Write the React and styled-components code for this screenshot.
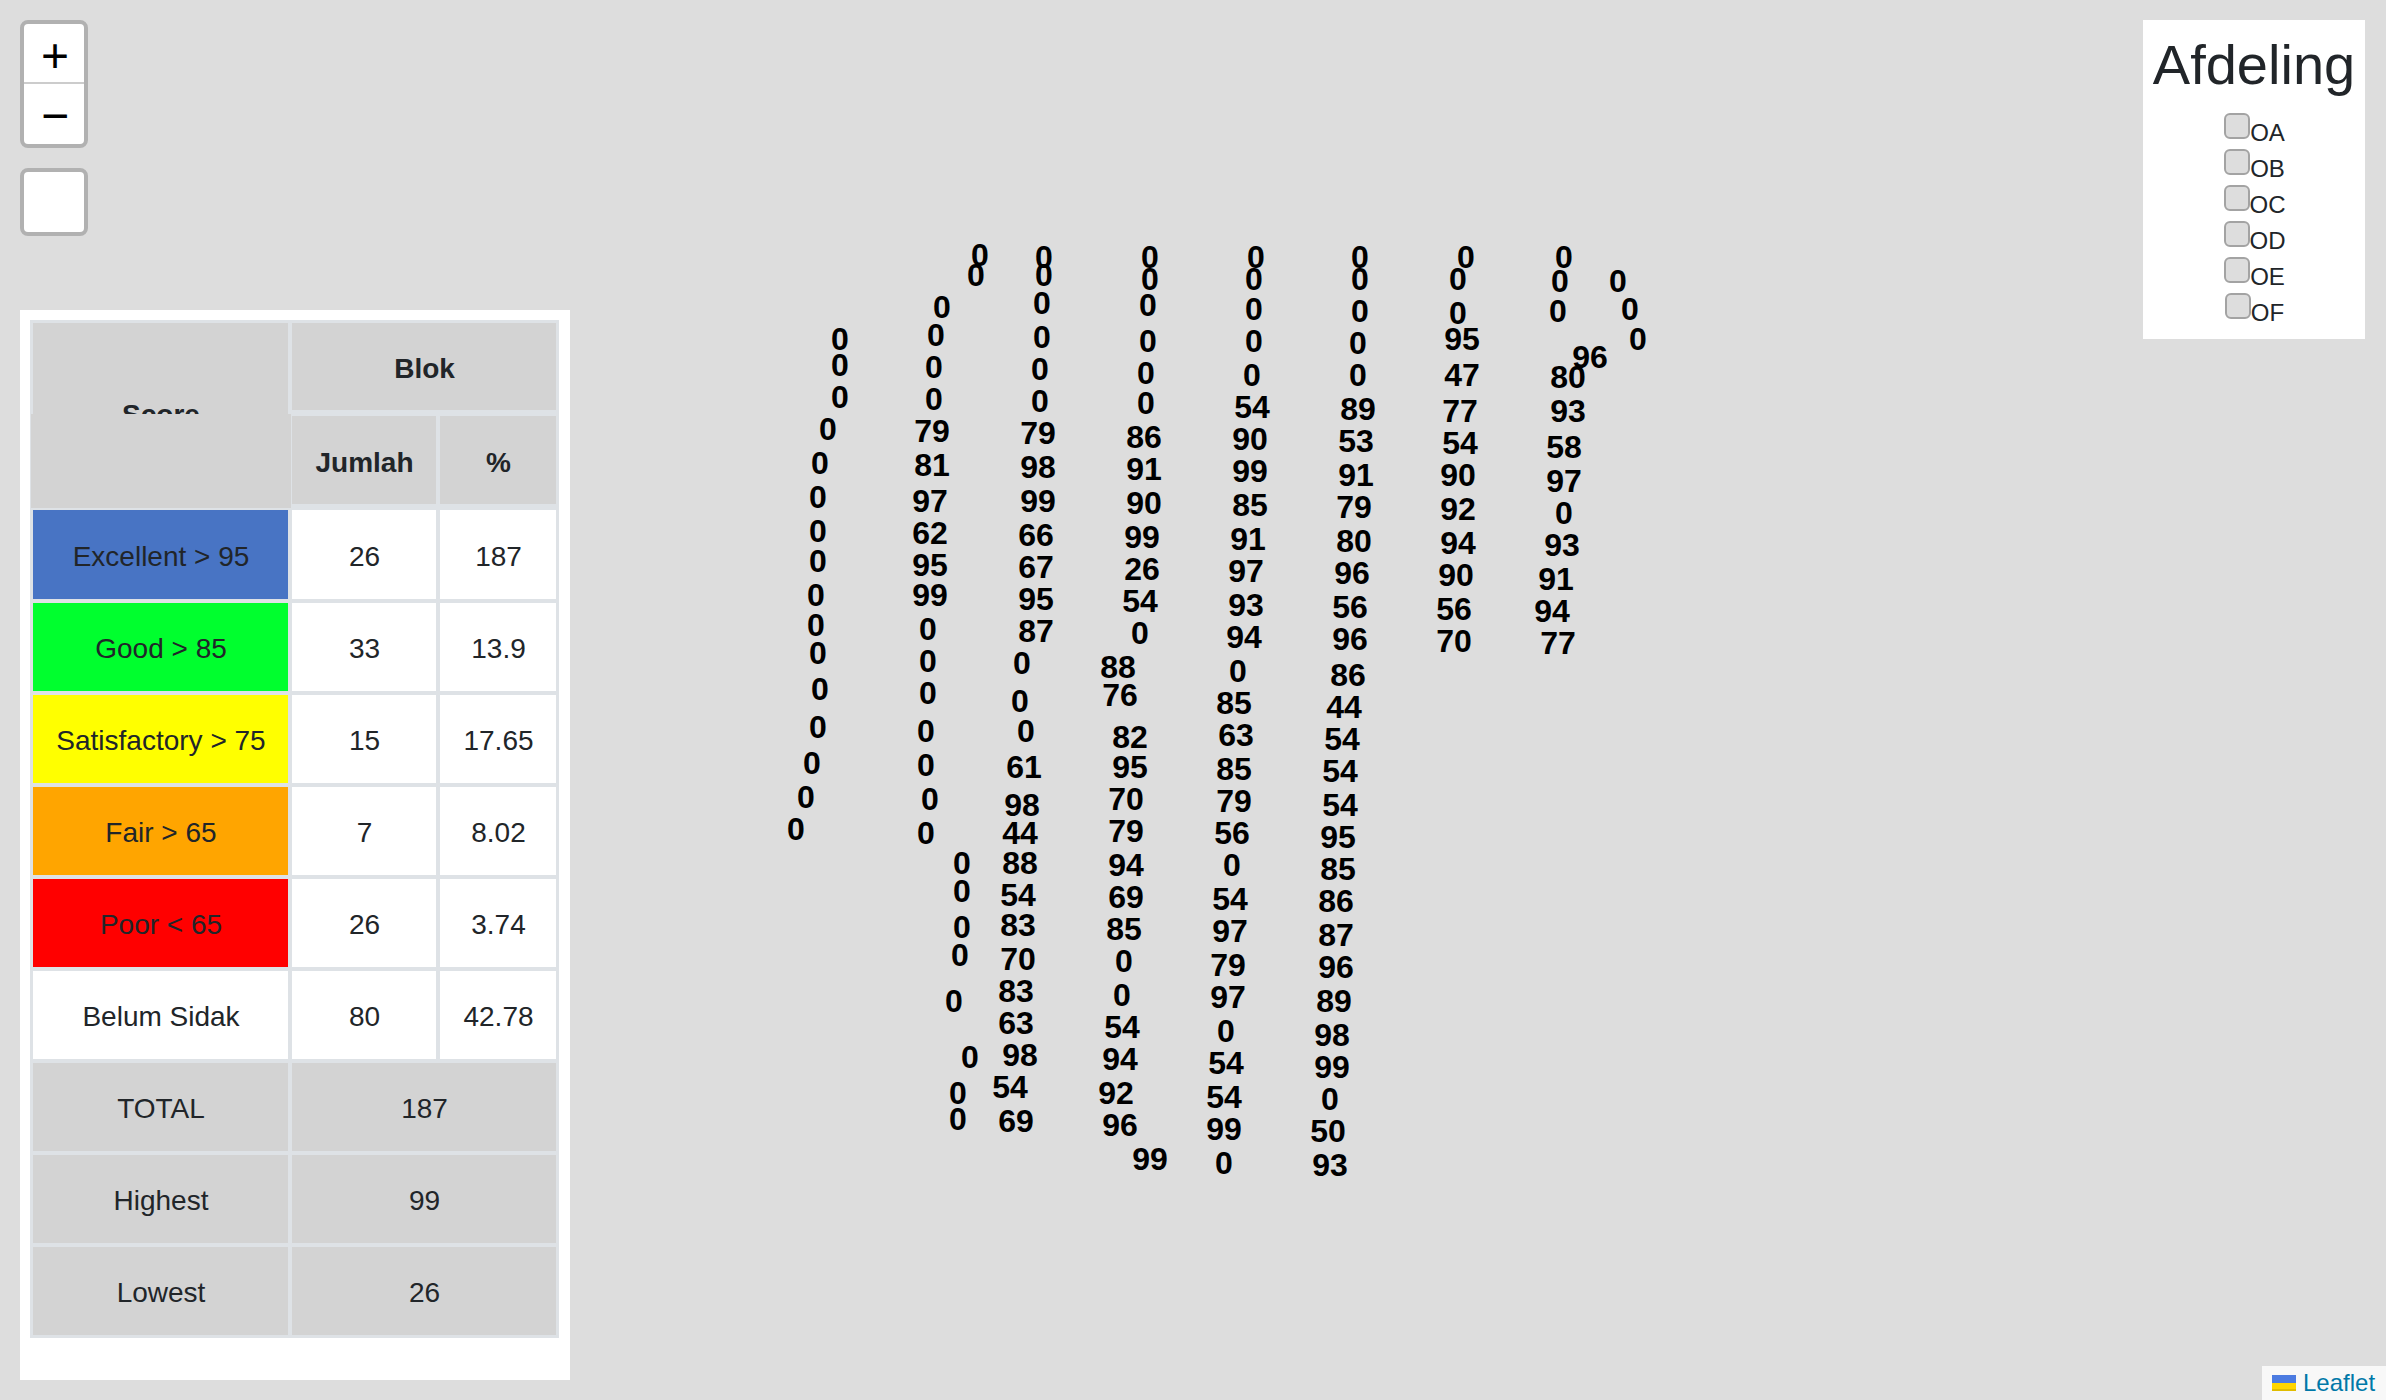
import React from "react";
import styled, { createGlobalStyle } from "styled-components";

const GlobalStyle = createGlobalStyle`
  * { box-sizing: border-box; }
  body {
    margin: 0;
    background: #ddd;
    color: #212529;
    font-family: "Liberation Sans", Arial, Helvetica, sans-serif;
  }
`;

const MapView = styled.main`
  position: relative;
  width: 100%;
  height: 1400px;
  overflow: hidden;
  background: #ddd;
  display: flex;
  justify-content: space-between;
`;

const LeftControls = styled.div`
  display: flex;
  flex-direction: column;
  justify-content: space-between;
  align-items: flex-start;
  padding: 20px;
`;

const ButtonStack = styled.div`
  display: flex;
  flex-direction: column;
  gap: 20px;
`;

const Bar = styled.div`
  width: 68px;
  border: 4px solid #b1b1b1;
  border-radius: 8px;
  background: #b1b1b1;
`;

const BarButton = styled.button`
  display: flex;
  align-items: center;
  justify-content: center;
  width: 60px;
  height: 60px;
  padding: ${(p) => p.$shift || 0}px 0 0 2px;
  border: 0;
  border-bottom: ${(p) => (p.$divided ? "2px solid #ccc" : "0")};
  border-radius: ${(p) => p.$radius};
  background: #fff;
  color: #000;
  font: 48px/54px "Liberation Sans", Arial, sans-serif;
`;

const Legend = styled.section`
  width: 550px;
  height: 1070px;
  padding: 10px 10px 0;
  background: #fff;
`;

const Table = styled.div`
  display: flex;
  flex-direction: column;
  gap: 4px;
  width: 529px;
  padding: 3px;
  background: #dee2e6;
  font-size: 28px;
  line-height: 42px;
`;

const HeadRow = styled.div`
  display: flex;
  gap: 4px;
  height: 183px;
`;

const ScoreColumn = styled.div`
  width: 255px;
`;

const ScoreTitle = styled.div`
  height: 91px;
  padding: 71px 0 0 1px;
  overflow: hidden;
  background: #d3d3d3;
  font-weight: 700;
  text-align: center;
`;

const ScoreFiller = styled.div`
  height: 94px;
  margin: 0 -3px 0 -2px;
  background: #d3d3d3;
`;

const HeadGroup = styled.div`
  display: flex;
  flex-direction: column;
  gap: 6px;
`;

const Row = styled.div`
  display: flex;
  gap: 4px;
`;

const Cell = styled.div`
  display: flex;
  align-items: center;
  justify-content: center;
  width: ${(p) => p.$w}px;
  height: ${(p) => p.$h || 88}px;
  padding: ${(p) => (p.$low ? 5 : 3)}px 0 0 1px;
  background: ${(p) => p.$bg || "#fff"};
  font-weight: ${(p) => (p.$bold ? 700 : 400)};
`;

const Filter = styled.section`
  align-self: flex-start;
  width: 222px;
  height: 319px;
  margin: 20px 21px 0 0;
  padding: 11px 0 0;
  background: #fff;
  text-align: center;
`;

const FilterTitle = styled.h1`
  margin: 0 0 12px;
  font-size: 56px;
  font-weight: 400;
  line-height: 68px;
`;

const Option = styled.label`
  display: flex;
  justify-content: center;
  height: 36px;
  padding-left: 1px;
  font-size: 24px;
  line-height: 36px;
`;

const Check = styled.input`
  appearance: none;
  width: 26px;
  height: 26px;
  margin: 2px 0 0;
  border: 2px solid #a3a3a3;
  border-radius: 6px;
  background: #ddd;
`;

const OptionText = styled.span`
  padding-top: 4px;
`;

const Attribution = styled.div`
  position: absolute;
  right: 0;
  bottom: 0;
  display: flex;
  align-items: center;
  gap: 7px;
  width: 124px;
  height: 34px;
  padding-left: 10px;
  background: #f8f8f8;
  color: #0078a8;
  font-size: 24px;
  line-height: 34px;
`;

const Flag = styled.svg`
  width: 24px;
  height: 16px;
`;

const Marker = styled.span`
  position: absolute;
  width: 40px;
  margin: -4px 0 0 -20px;
  color: #000;
  font-size: 32px;
  font-weight: 700;
  line-height: 32px;
  text-align: center;
`;

const scores = [
  ["Excellent > 95", "26", "187", "#4874c4"],
  ["Good > 85", "33", "13.9", "#00ff2e"],
  ["Satisfactory > 75", "15", "17.65", "#ffff00"],
  ["Fair > 65", "7", "8.02", "#ffa500"],
  ["Poor < 65", "26", "3.74", "#ff0000"],
  ["Belum Sidak", "80", "42.78", "#fff"],
];

const totals = [["TOTAL", "187"], ["Highest", "99"], ["Lowest", "26"]];

const sections = ["OA", "OB", "OC", "OD", "OE", "OF"];

// Block markers: score, horizontal centre, top of the digits.
const markers = [
  [0, 840, 327], [0, 840, 353], [0, 840, 385], [0, 828, 417], [0, 820, 451], [0, 818, 485],
  [0, 818, 519], [0, 818, 549], [0, 816, 583], [0, 816, 613], [0, 818, 641], [0, 820, 677],
  [0, 818, 715], [0, 812, 751], [0, 806, 785], [0, 796, 817],

  [0, 942, 295], [0, 936, 323], [0, 934, 355], [0, 934, 387], [79, 932, 419], [81, 932, 453],
  [97, 930, 489], [62, 930, 521], [95, 930, 553], [99, 930, 583], [0, 928, 617], [0, 928, 649],
  [0, 928, 681], [0, 926, 719], [0, 926, 753], [0, 930, 787], [0, 926, 821], [0, 962, 851],
  [0, 962, 879], [0, 962, 915], [0, 960, 943], [0, 954, 989], [0, 970, 1045], [0, 958, 1081],
  [0, 958, 1107],

  [0, 980, 243], [0, 976, 263], [0, 1044, 245], [0, 1044, 263], [0, 1042, 291], [0, 1042, 325],
  [0, 1040, 357], [0, 1040, 389], [79, 1038, 421], [98, 1038, 455], [99, 1038, 489],
  [66, 1036, 523], [67, 1036, 555], [95, 1036, 587], [87, 1036, 619], [0, 1022, 651],
  [0, 1020, 689], [0, 1026, 719], [61, 1024, 755], [98, 1022, 793], [44, 1020, 821],
  [88, 1020, 851], [54, 1018, 883], [83, 1018, 913], [70, 1018, 947], [83, 1016, 979],
  [63, 1016, 1011], [98, 1020, 1043], [54, 1010, 1075], [69, 1016, 1109],

  [0, 1150, 245], [0, 1150, 267], [0, 1148, 293], [0, 1148, 329], [0, 1146, 361],
  [0, 1146, 391], [86, 1144, 425], [91, 1144, 457], [90, 1144, 491], [99, 1142, 525],
  [26, 1142, 557], [54, 1140, 589], [0, 1140, 621], [88, 1118, 655], [76, 1120, 683],
  [82, 1130, 725], [95, 1130, 755], [70, 1126, 787], [79, 1126, 819], [94, 1126, 853],
  [69, 1126, 885], [85, 1124, 917], [0, 1124, 949], [0, 1122, 983], [54, 1122, 1015],
  [94, 1120, 1047], [92, 1116, 1081], [96, 1120, 1113], [99, 1150, 1147],

  [0, 1256, 245], [0, 1254, 267], [0, 1254, 297], [0, 1254, 329], [0, 1252, 363],
  [54, 1252, 395], [90, 1250, 427], [99, 1250, 459], [85, 1250, 493], [91, 1248, 527],
  [97, 1246, 559], [93, 1246, 593], [94, 1244, 625], [0, 1238, 659], [85, 1234, 691],
  [63, 1236, 723], [85, 1234, 757], [79, 1234, 789], [56, 1232, 821], [0, 1232, 853],
  [54, 1230, 887], [97, 1230, 919], [79, 1228, 953], [97, 1228, 985], [0, 1226, 1019],
  [54, 1226, 1051], [54, 1224, 1085], [99, 1224, 1117], [0, 1224, 1151],

  [0, 1360, 245], [0, 1360, 267], [0, 1360, 299], [0, 1358, 331], [0, 1358, 363],
  [89, 1358, 397], [53, 1356, 429], [91, 1356, 463], [79, 1354, 495], [80, 1354, 529],
  [96, 1352, 561], [56, 1350, 595], [96, 1350, 627], [86, 1348, 663], [44, 1344, 695],
  [54, 1342, 727], [54, 1340, 759], [54, 1340, 793], [95, 1338, 825], [85, 1338, 857],
  [86, 1336, 889], [87, 1336, 923], [96, 1336, 955], [89, 1334, 989], [98, 1332, 1023],
  [99, 1332, 1055], [0, 1330, 1087], [50, 1328, 1119], [93, 1330, 1153],

  [0, 1466, 245], [0, 1458, 267], [0, 1458, 301], [95, 1462, 327], [47, 1462, 363],
  [77, 1460, 399], [54, 1460, 431], [90, 1458, 463], [92, 1458, 497], [94, 1458, 531],
  [90, 1456, 563], [56, 1454, 597], [70, 1454, 629],

  [0, 1564, 245], [0, 1560, 269], [0, 1558, 299], [96, 1590, 345], [80, 1568, 365],
  [93, 1568, 399], [58, 1564, 435], [97, 1564, 469], [0, 1564, 501], [93, 1562, 533],
  [91, 1556, 567], [94, 1552, 599], [77, 1558, 631], [0, 1618, 269], [0, 1630, 297],
  [0, 1638, 327],
];

function ScoreTable() {
  return (
    <Table>
      <HeadRow>
        <ScoreColumn>
          <ScoreTitle>Score</ScoreTitle>
          <ScoreFiller />
        </ScoreColumn>
        <HeadGroup>
          <Cell $w={264} $h={87} $bg="#d3d3d3" $bold $low>Blok</Cell>
          <Row>
            <Cell $w={144} $bg="#d3d3d3" $bold $low>Jumlah</Cell>
            <Cell $w={116} $bg="#d3d3d3" $bold $low>%</Cell>
          </Row>
        </HeadGroup>
      </HeadRow>
      {scores.map(([label, count, percent, color], i) => (
        <Row key={label}>
          <Cell $w={255} $h={i === 0 ? 89 : 88} $bg={color} $low={i === 0}>{label}</Cell>
          <Cell $w={144} $h={i === 0 ? 89 : 88} $low={i === 0}>{count}</Cell>
          <Cell $w={116} $h={i === 0 ? 89 : 88} $low={i === 0}>{percent}</Cell>
        </Row>
      ))}
      {totals.map(([label, value]) => (
        <Row key={label}>
          <Cell $w={255} $bg="#d3d3d3">{label}</Cell>
          <Cell $w={264} $bg="#d3d3d3">{value}</Cell>
        </Row>
      ))}
    </Table>
  );
}

export default function App() {
  return (
    <>
      <GlobalStyle />
      <MapView>
        {markers.map(([score, x, y]) => (
          <Marker key={`${x}-${y}`} style={{ left: x, top: y }}>{score}</Marker>
        ))}
        <LeftControls>
          <ButtonStack>
            <Bar>
              <BarButton $divided $shift={6} $radius="4px 4px 0 0">+</BarButton>
              <BarButton $shift={4} $radius="0 0 4px 4px">−</BarButton>
            </Bar>
            <Bar>
              <BarButton $radius="4px" aria-label="Layers" />
            </Bar>
          </ButtonStack>
          <Legend>
            <ScoreTable />
          </Legend>
        </LeftControls>
        <Filter>
          <FilterTitle>Afdeling</FilterTitle>
          {sections.map((name) => (
            <Option key={name}>
              <Check type="checkbox" />
              <OptionText>{name}</OptionText>
            </Option>
          ))}
        </Filter>
        <Attribution>
          <Flag viewBox="0 0 12 8">
            <path fill="#4c7be1" d="M0 0h12v4H0z" />
            <path fill="#ffd500" d="M0 4h12v3H0z" />
            <path fill="#e0bc00" d="M0 7h12v1H0z" />
          </Flag>
          Leaflet
        </Attribution>
      </MapView>
    </>
  );
}
